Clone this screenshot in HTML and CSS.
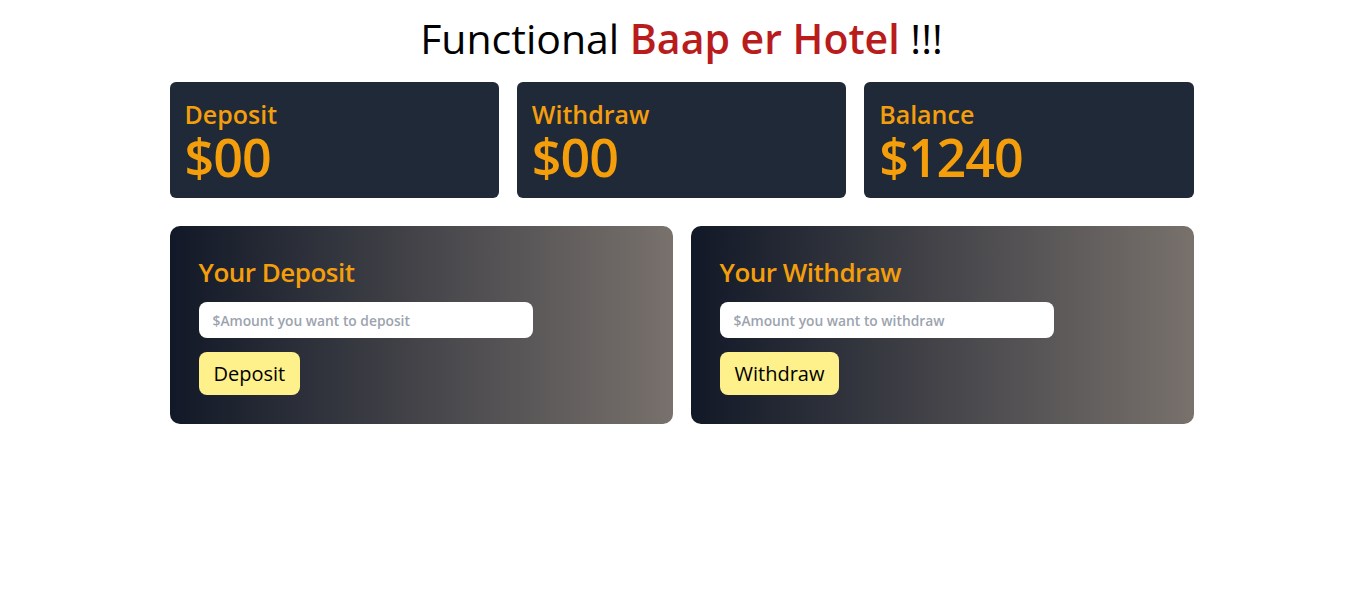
FILE: index.html
```html
<!DOCTYPE html>
<html>
<head>
<meta charset="utf-8">
<link rel="stylesheet" href="styles.css">
</head>
<body>
<div class="page">
  <h1 class="title">Functional <span class="brand">Baap er Hotel</span> !!!</h1>
  <div class="stats">
    <div class="stat">
      <h3 class="stat-label">Deposit</h3>
      <p class="stat-value">$00</p>
    </div>
    <div class="stat">
      <h3 class="stat-label">Withdraw</h3>
      <p class="stat-value">$00</p>
    </div>
    <div class="stat">
      <h3 class="stat-label">Balance</h3>
      <p class="stat-value">$1240</p>
    </div>
  </div>
  <div class="forms">
    <div class="panel">
      <h3 class="panel-title">Your Deposit</h3>
      <input class="field" type="text" placeholder="$Amount you want to deposit">
      <button class="btn">Deposit</button>
    </div>
    <div class="panel">
      <h3 class="panel-title">Your Withdraw</h3>
      <input class="field" type="text" placeholder="$Amount you want to withdraw">
      <button class="btn">Withdraw</button>
    </div>
  </div>
</div>
</body>
</html>
```

FILE: styles.css
```css
* { box-sizing: border-box; }
body {
  margin: 0;
  background: #ffffff;
  font-family: "Open Sans", "Noto Sans", sans-serif;
}
.page {
  width: 1024px;
  margin: 0 auto;
  position: relative;
  left: 2px;
}
.title {
  margin: 0;
  padding-top: 12px;
  text-align: center;
  font-size: 41px;
  line-height: 52px;
  font-weight: 400;
  color: #000;
}
.brand {
  color: #b91c1c;
  font-weight: 600;
}
.stats {
  margin-top: 18px;
  display: grid;
  grid-template-columns: repeat(3, 1fr);
  gap: 18px;
}
.stat {
  background: #1f2937;
  border-radius: 6px;
  height: 116px;
  padding: 17px 15px 0;
  color: #f59e0b;
}
.stat-label {
  margin: 0;
  font-size: 25px;
  line-height: 30px;
  font-weight: 600;
}
.stat-value {
  margin: 0;
  font-size: 52px;
  line-height: 56px;
  font-weight: 600;
  letter-spacing: -1px;
}
.forms {
  margin-top: 28px;
  display: grid;
  grid-template-columns: 1fr 1fr;
  gap: 18px;
}
.panel {
  height: 198px;
  border-radius: 10px;
  background: linear-gradient(to right, #111827, #78716c);
  padding: 28px 29px;
  display: flex;
  flex-direction: column;
  align-items: flex-start;
}
.panel-title {
  margin: 0;
  font-size: 26px;
  line-height: 36px;
  font-weight: 600;
  color: #f59e0b;
  letter-spacing: -0.5px;
}
.field {
  margin-top: 12px;
  width: 334px;
  height: 36px;
  border: none;
  border-radius: 8px;
  background: #fff;
  padding: 0 14px;
  font-family: inherit;
  font-size: 13.8px;
  font-weight: 600;
  outline: none;
}
.field::placeholder {
  color: #9ca3af;
}
.btn {
  margin-top: 14px;
  height: 43px;
  padding: 0 15px;
  border: none;
  border-radius: 8px;
  background: #fef08a;
  color: #000;
  font-family: inherit;
  font-size: 20px;
  font-weight: 400;
}
```
